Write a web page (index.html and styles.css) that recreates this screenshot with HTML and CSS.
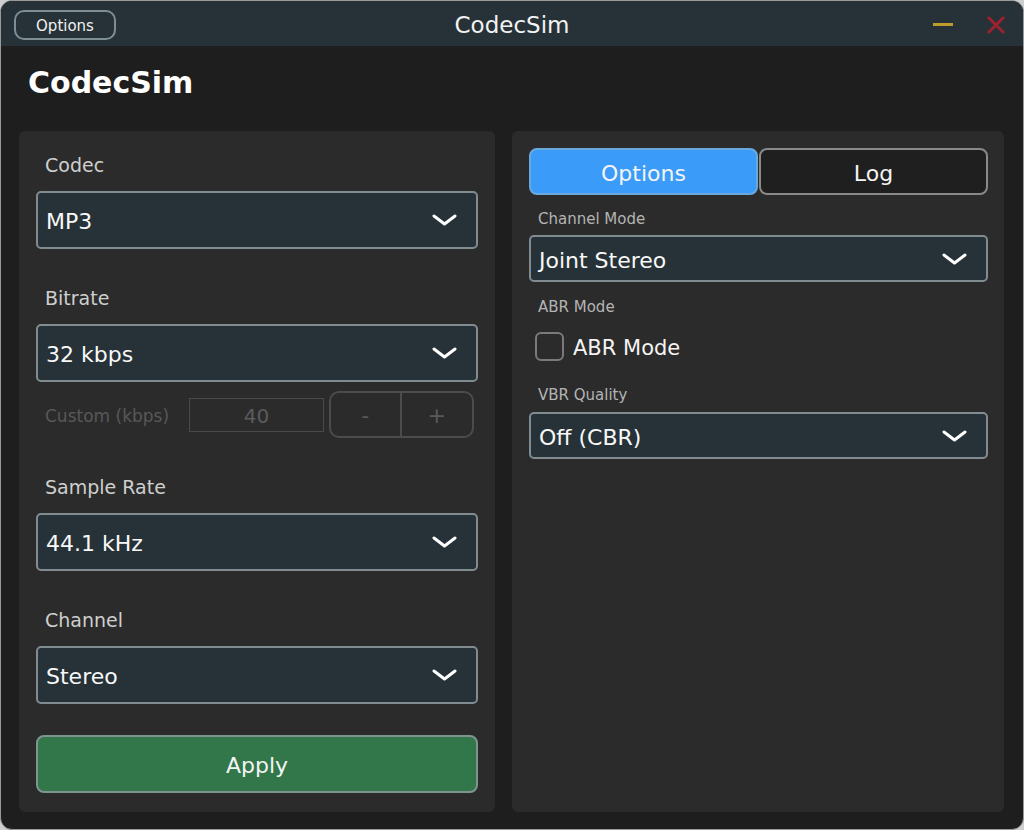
FILE: index.html
```html
<!DOCTYPE html>
<html lang="en">
<head>
    <meta charset="UTF-8">
    <meta name="viewport" content="width=device-width, initial-scale=1.0">
    <title>CodecSim</title>
    <link rel="stylesheet" href="styles.css">
</head>
<body>
    <div class="window">
        <div class="titlebar">
            <div class="tb-left">
                <button class="tb-options">Options</button>
            </div>
            <div class="tb-title">CodecSim</div>
            <div class="tb-right">
                <span class="tb-min"></span>
                <svg class="tb-close" width="18" height="18" viewBox="0 0 18 18">
                    <path d="M1 1 L17 17 M17 1 L1 17" stroke="#a3202c" stroke-width="2.6" fill="none"/>
                </svg>
            </div>
        </div>

        <div class="main">
            <h1 class="app-title">CodecSim</h1>

            <div class="panels">
                <!-- ajustes del codec -->
                <div class="panel panel-left">
                    <div class="field">
                        <label>Codec</label>
                        <div class="combo">
                            <span>MP3</span>
                            <svg class="chev" width="25" height="12" viewBox="0 0 25 12"><polyline points="2,2 12.5,10 23,2"/></svg>
                        </div>
                    </div>
                    <div class="field">
                        <label>Bitrate</label>
                        <div class="combo">
                            <span>32 kbps</span>
                            <svg class="chev" width="25" height="12" viewBox="0 0 25 12"><polyline points="2,2 12.5,10 23,2"/></svg>
                        </div>
                        <div class="custom-row">
                            <span class="custom-label">Custom (kbps)</span>
                            <input class="custom-input" type="text" value="40" disabled>
                            <div class="spin">
                                <span>-</span>
                                <span>+</span>
                            </div>
                        </div>
                    </div>
                    <div class="field">
                        <label>Sample Rate</label>
                        <div class="combo">
                            <span>44.1 kHz</span>
                            <svg class="chev" width="25" height="12" viewBox="0 0 25 12"><polyline points="2,2 12.5,10 23,2"/></svg>
                        </div>
                    </div>
                    <div class="field">
                        <label>Channel</label>
                        <div class="combo">
                            <span>Stereo</span>
                            <svg class="chev" width="25" height="12" viewBox="0 0 25 12"><polyline points="2,2 12.5,10 23,2"/></svg>
                        </div>
                    </div>
                    <button class="apply">Apply</button>
                </div>

                <!-- opciones / log -->
                <div class="panel panel-right">
                    <div class="tabs">
                        <button class="tab active">Options</button>
                        <button class="tab">Log</button>
                    </div>
                    <div class="small-label">Channel Mode</div>
                    <div class="combo combo-sm">
                        <span>Joint Stereo</span>
                        <svg class="chev" width="25" height="12" viewBox="0 0 25 12"><polyline points="2,2 12.5,10 23,2"/></svg>
                    </div>
                    <div class="small-label gap-top">ABR Mode</div>
                    <div class="check-row">
                        <span class="check"></span>
                        <span class="check-text">ABR Mode</span>
                    </div>
                    <div class="small-label gap-top2">VBR Quality</div>
                    <div class="combo combo-sm">
                        <span>Off (CBR)</span>
                        <svg class="chev" width="25" height="12" viewBox="0 0 25 12"><polyline points="2,2 12.5,10 23,2"/></svg>
                    </div>
                </div>
            </div>
        </div>
    </div>
</body>
</html>
```

FILE: styles.css
```css
html, body {
    margin: 0;
    padding: 0;
}
body {
    background: #cfcfcf;
    font-family: "DejaVu Sans", Verdana, sans-serif;
    color: #f0f0f0;
}
.window {
    box-sizing: border-box;
    width: 1024px;
    height: 830px;
    border: 1px solid #9a9a9a;
    border-radius: 12px;
    overflow: hidden;
    background: #1e1e1e;
    display: flex;
    flex-direction: column;
}

/* barra de titulo */
.titlebar {
    height: 45px;
    background: #263238;
    display: grid;
    grid-template-columns: 1fr auto 1fr;
    align-items: center;
}
.tb-left {
    padding-left: 13px;
}
.tb-options {
    box-sizing: border-box;
    width: 102px;
    height: 30px;
    margin-top: 2px;
    background: #263238;
    border: 2px solid #7e8e94;
    border-radius: 10px;
    color: #f0f0f0;
    font-family: inherit;
    font-size: 15px;
    padding: 2px 0 0;
}
.tb-title {
    font-size: 23px;
    color: #f2f2f2;
    margin-top: 2px;
}
.tb-right {
    display: flex;
    justify-content: flex-end;
    align-items: center;
    gap: 34px;
    padding-right: 18px;
}
.tb-min {
    width: 20px;
    height: 3px;
    background: #bf9b2c;
    margin-top: 2px;
}
.tb-close {
    display: block;
    margin-top: 2px;
}

.main {
    flex: 1;
    display: flex;
    flex-direction: column;
    padding: 0 19px 17px 18px;
}
.app-title {
    margin: 19px 0 30px 9px;
    font-size: 30px;
    line-height: 36px;
    font-weight: bold;
    color: #ffffff;
}
.panels {
    flex: 1;
    display: grid;
    grid-template-columns: 476px 1fr;
    gap: 17px;
}
.panel {
    background: #2b2b2b;
    border-radius: 6px;
}

/* panel izquierdo */
.panel-left {
    padding: 22px 17px 0 17px;
}
.field {
    margin-bottom: 37px;
}
.field label {
    display: block;
    padding-left: 9px;
    font-size: 19px;
    line-height: 24px;
    color: #cfcfcf;
    margin-bottom: 14px;
}
.combo {
    box-sizing: border-box;
    height: 58px;
    background: #263238;
    border: 2px solid #818c91;
    border-radius: 5px;
    display: flex;
    align-items: center;
    justify-content: space-between;
    padding: 0 19px 0 8px;
    font-size: 22px;
    color: #f8f8f8;
}
.combo span {
    padding-top: 3px;
}
.chev {
    display: block;
}
.chev polyline {
    fill: none;
    stroke: #ffffff;
    stroke-width: 3;
    stroke-linecap: round;
    stroke-linejoin: round;
}
.custom-row {
    display: flex;
    align-items: center;
    margin-top: 9px;
    padding: 0 4px 0 9px;
    height: 47px;
}
.custom-label {
    font-size: 17px;
    color: #585858;
    width: 144px;
    padding-top: 2px;
}
.custom-input {
    box-sizing: border-box;
    width: 135px;
    height: 34px;
    background: transparent;
    border: 1px solid #4a4a4a;
    color: #5c5c5c;
    font-family: inherit;
    font-size: 20px;
    text-align: center;
    margin: 0 5px 0 0;
    padding: 2px 0 0;
}
.spin {
    box-sizing: border-box;
    flex: 1;
    height: 47px;
    border: 2px solid #4c4c4c;
    border-radius: 10px;
    display: grid;
    grid-template-columns: 1fr 1fr;
}
.spin span {
    display: flex;
    align-items: center;
    justify-content: center;
    font-size: 22px;
    color: #5a5a5a;
    padding-top: 2px;
}
.spin span:first-child {
    border-right: 2px solid #4c4c4c;
}
.apply {
    box-sizing: border-box;
    width: 100%;
    height: 58px;
    margin-top: -6px;
    background: #32774a;
    border: 2px solid #7f9490;
    border-radius: 8px;
    color: #f4f4f4;
    font-family: inherit;
    font-size: 22px;
    padding: 3px 0 0;
}

/* panel derecho */
.panel-right {
    padding: 17px 16px 0 17px;
}
.tabs {
    display: grid;
    grid-template-columns: 1fr 1fr;
    gap: 1px;
}
.tab {
    box-sizing: border-box;
    height: 47px;
    border: 2px solid #8a8a8a;
    border-radius: 8px;
    background: #1f1f1f;
    color: #f4f4f4;
    font-family: inherit;
    font-size: 22px;
    padding: 3px 0 0;
}
.tab.active {
    background: #3a9cf8;
    border-color: #69a9de;
}
.small-label {
    padding-left: 9px;
    font-size: 15px;
    line-height: 20px;
    color: #b4b4b4;
    margin: 14px 0 6px;
}
.gap-top {
    margin-top: 15px;
    margin-bottom: 15px;
}
.gap-top2 {
    margin-top: 24px;
    margin-bottom: 7px;
}
.combo-sm {
    height: 47px;
}
.check-row {
    display: flex;
    align-items: center;
    gap: 9px;
    padding-left: 6px;
    height: 29px;
    font-size: 21px;
    color: #f4f4f4;
}
.check-text {
    padding-top: 3px;
}
.check {
    box-sizing: border-box;
    width: 29px;
    height: 29px;
    border: 2px solid #7a7a7a;
    border-radius: 6px;
}
```
